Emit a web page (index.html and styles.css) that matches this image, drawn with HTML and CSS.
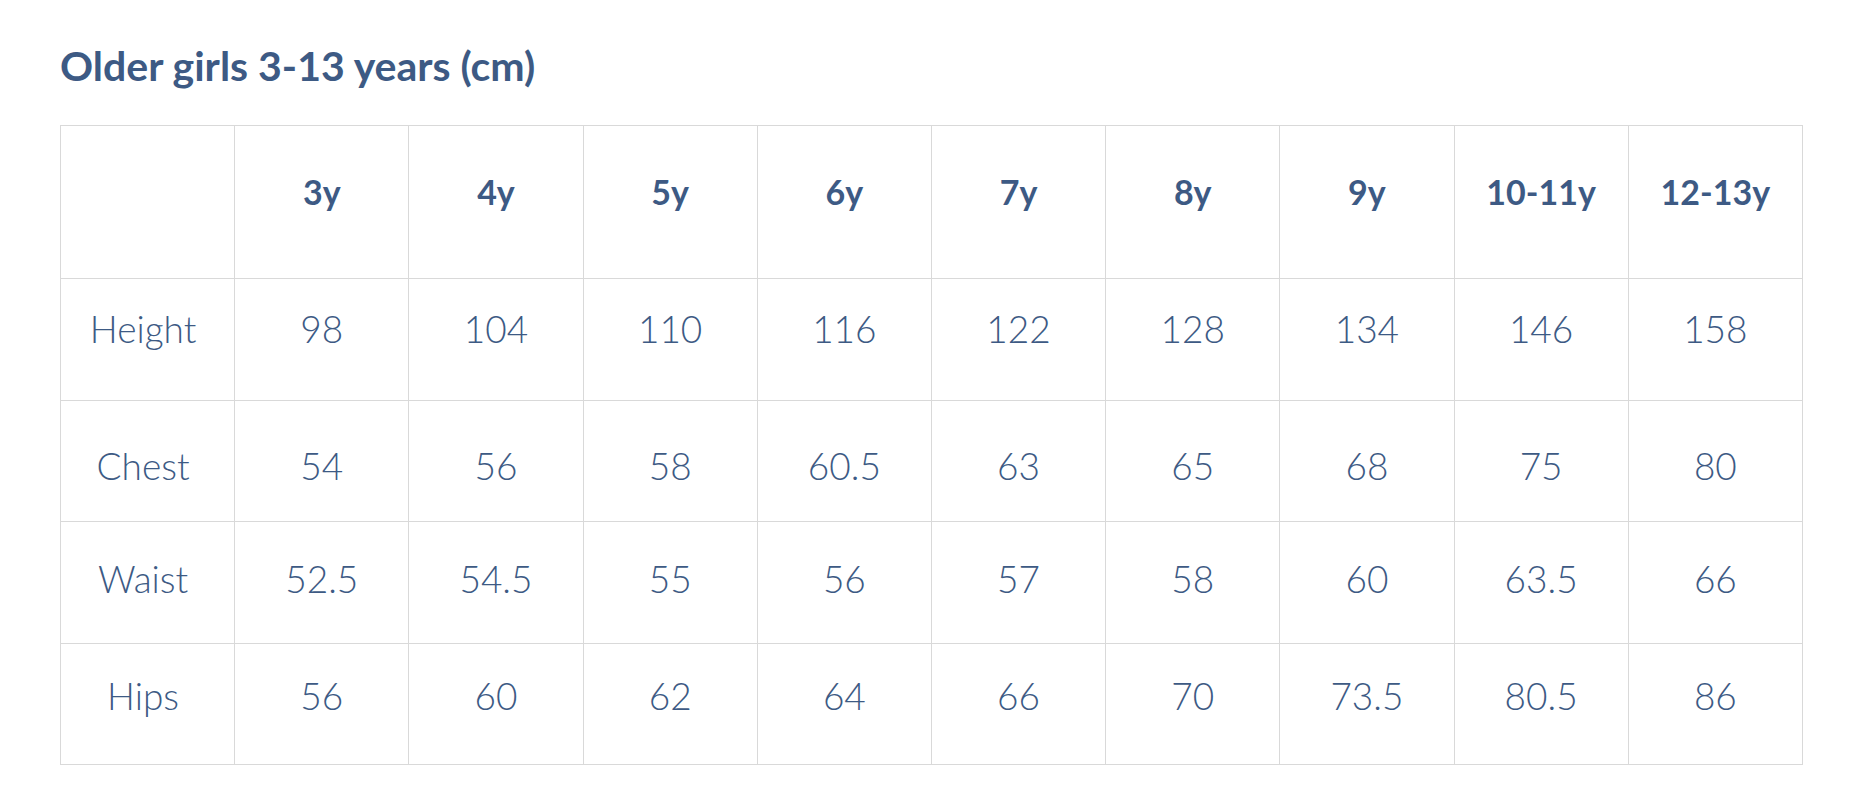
FILE: index.html
```html
<!DOCTYPE html>
<html lang="en">
<head>
<meta charset="utf-8">
<title>Older girls 3-13 years (cm)</title>
<link rel="stylesheet" href="styles.css">
</head>
<body>
<main class="page">
  <h2 class="title">Older girls 3-13 years (cm)</h2>
  <table class="size-table">
    <tbody>
      <tr class="row row-head">
        <td class="label"></td>
        <td><strong>3y</strong></td>
        <td><strong>4y</strong></td>
        <td><strong>5y</strong></td>
        <td><strong>6y</strong></td>
        <td><strong>7y</strong></td>
        <td><strong>8y</strong></td>
        <td><strong>9y</strong></td>
        <td><strong>10-11y</strong></td>
        <td><strong>12-13y</strong></td>
      </tr>
      <tr class="row row-height">
        <td class="label">Height</td><td>98</td><td>104</td><td>110</td><td>116</td><td>122</td><td>128</td><td>134</td><td>146</td><td>158</td>
      </tr>
      <tr class="row row-chest">
        <td class="label">Chest</td><td>54</td><td>56</td><td>58</td><td>60.5</td><td>63</td><td>65</td><td>68</td><td>75</td><td>80</td>
      </tr>
      <tr class="row row-waist">
        <td class="label">Waist</td><td>52.5</td><td>54.5</td><td>55</td><td>56</td><td>57</td><td>58</td><td>60</td><td>63.5</td><td>66</td>
      </tr>
      <tr class="row row-hips">
        <td class="label">Hips</td><td>56</td><td>60</td><td>62</td><td>64</td><td>66</td><td>70</td><td>73.5</td><td>80.5</td><td>86</td>
      </tr>
    </tbody>
  </table>
</main>
</body>
</html>
```

FILE: styles.css
```css
html, body {
  margin: 0;
  padding: 0;
  background: #ffffff;
}

body {
  font-family: Lato, "Open Sans", "Noto Sans", sans-serif;
  color: #3d5a84;
}

.page {
  padding: 42px 57px 0 60px;
}

.title {
  margin: 0 0 35px 0;
  font-size: 41px;
  line-height: 48px;
  font-weight: 700;
  color: #3d5a84;
}

.size-table {
  width: 1743px;
  border-collapse: collapse;
  table-layout: fixed;
}

.size-table td {
  border: 1px solid #d9d9d9;
  text-align: center;
  vertical-align: top;
  padding: 0;
  font-size: 37px;
  line-height: 40px;
  font-weight: 300;
  color: #3d5a84;
  box-sizing: border-box;
}

.size-table td.label {
  padding-right: 9px;
}

.size-table strong {
  font-weight: 700;
  font-size: 34px;
}

.row-head td { height: 153px; padding-top: 45px; }
.row-height td { height: 122px; padding-top: 30px; }
.row-chest td { height: 121px; padding-top: 45px; }
.row-waist td { height: 122px; padding-top: 37px; }
.row-hips td { height: 121px; padding-top: 32px; }
```
